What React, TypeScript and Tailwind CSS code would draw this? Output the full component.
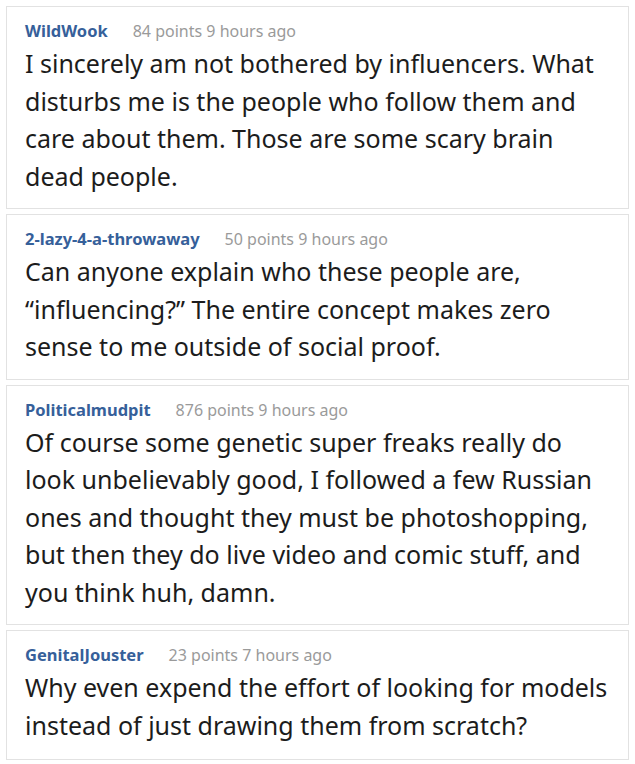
const comments = [
  {
    user: "WildWook",
    meta: "84 points 9 hours ago",
    text: "I sincerely am not bothered by influencers. What disturbs me is the people who follow them and care about them. Those are some scary brain dead people.",
  },
  {
    user: "2-lazy-4-a-throwaway",
    meta: "50 points 9 hours ago",
    text: "Can anyone explain who these people are, \u201cinfluencing?\u201d The entire concept makes zero sense to me outside of social proof.",
  },
  {
    user: "Politicalmudpit",
    meta: "876 points 9 hours ago",
    text: "Of course some genetic super freaks really do look unbelievably good, I followed a few Russian ones and thought they must be photoshopping, but then they do live video and comic stuff, and you think huh, damn.",
  },
  {
    user: "GenitalJouster",
    meta: "23 points 7 hours ago",
    text: "Why even expend the effort of looking for models instead of just drawing them from scratch?",
  },
];

export default function App() {
  return (
    <div className="w-[635px] min-h-[764px] bg-white px-[6px] pt-[6px] font-['Noto_Sans',sans-serif]">
      <div className="flex flex-col gap-[5px]">
        {comments.map((c, i) => (
          <div
            key={c.user}
            className={`border border-[#e2e2e2] pl-[18px] pr-3 pt-[14px] ${
              i === comments.length - 1 ? "pb-[15px]" : "pb-[13px]"
            }`}
          >
            <div className="flex items-baseline gap-[25px] leading-5">
              <span className="text-[16.5px] font-bold text-[#36609a]">{c.user}</span>
              <span className="text-[16px] text-[#9a9a9a]">{c.meta}</span>
            </div>
            <p className="mt-[4px] text-[25px] leading-[37.5px] text-[#1c1c1c]">{c.text}</p>
          </div>
        ))}
      </div>
    </div>
  );
}
